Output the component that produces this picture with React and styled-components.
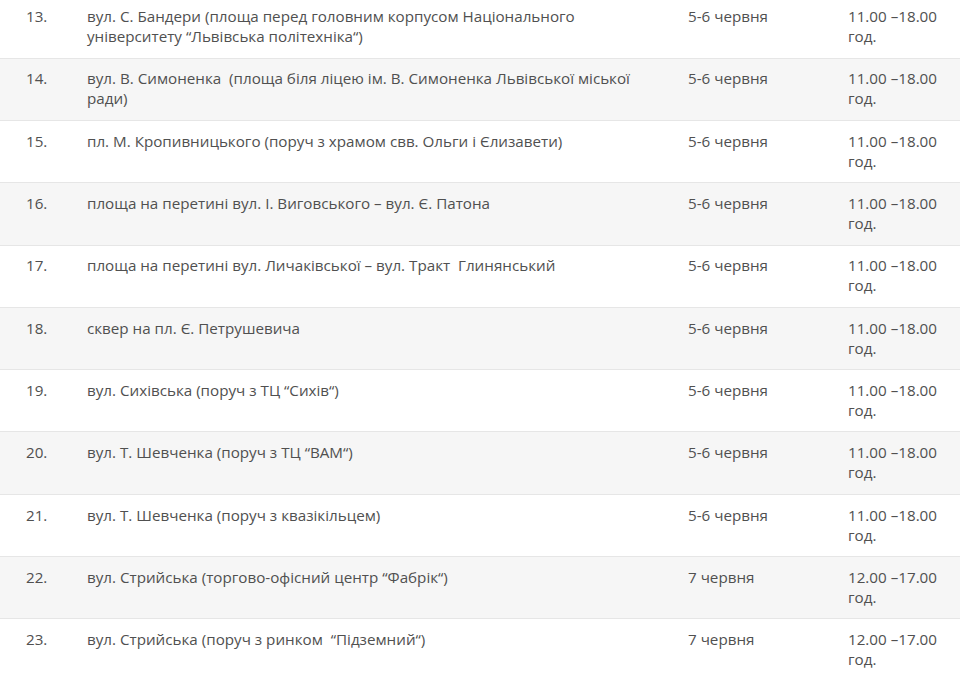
import React from 'react';
import styled, { createGlobalStyle } from 'styled-components';

const GlobalStyle = createGlobalStyle`
  html, body {
    margin: 0;
    padding: 0;
    background: #ffffff;
    overflow: hidden;
  }
`;

const Table = styled.div`
  margin-top: -3.6px;
  width: 960px;
  font-family: "Open Sans", "Noto Sans", sans-serif;
  font-size: 15.2px;
  line-height: 20px;
  color: #505050;
`;

const Row = styled.div`
  display: grid;
  grid-template-columns: 87px 601px 160px 1fr;
  padding: 9.75px 0 11.55px;
  border-bottom: 1px solid #e6e6e6;
  background: ${(p) => (p.$shaded ? '#f6f6f6' : '#ffffff')};
`;

const NumCell = styled.div`
  padding-left: 26px;
`;

const AddressCell = styled.div`
  padding-right: 36px;
  white-space: pre-wrap;
`;

const DateCell = styled.div``;

const TimeCell = styled.div`
  padding-right: 12px;
`;

const rows = [
  ['13.', 'вул. С. Бандери (площа перед головним корпусом Національного університету “Львівська політехніка“)', '5-6 червня', '11.00 –18.00 год.'],
  ['14.', 'вул. В. Симоненка  (площа біля ліцею ім. В. Симоненка Львівської міської ради)', '5-6 червня', '11.00 –18.00 год.'],
  ['15.', 'пл. М. Кропивницького (поруч з храмом свв. Ольги і Єлизавети)', '5-6 червня', '11.00 –18.00 год.'],
  ['16.', 'площа на перетині вул. І. Виговського – вул. Є. Патона', '5-6 червня', '11.00 –18.00 год.'],
  ['17.', 'площа на перетині вул. Личаківської – вул. Тракт  Глинянський', '5-6 червня', '11.00 –18.00 год.'],
  ['18.', 'сквер на пл. Є. Петрушевича', '5-6 червня', '11.00 –18.00 год.'],
  ['19.', 'вул. Сихівська (поруч з ТЦ “Сихів“)', '5-6 червня', '11.00 –18.00 год.'],
  ['20.', 'вул. Т. Шевченка (поруч з ТЦ “ВАМ“)', '5-6 червня', '11.00 –18.00 год.'],
  ['21.', 'вул. Т. Шевченка (поруч з квазікільцем)', '5-6 червня', '11.00 –18.00 год.'],
  ['22.', 'вул. Стрийська (торгово-офісний центр “Фабрік“)', '7 червня', '12.00 –17.00 год.'],
  ['23.', 'вул. Стрийська (поруч з ринком  “Підземний“)', '7 червня', '12.00 –17.00 год.'],
];

export default function App() {
  return (
    <>
      <GlobalStyle />
      <Table>
        {rows.map(([num, address, date, time], i) => (
          <Row key={num} $shaded={i % 2 === 1}>
            <NumCell>{num}</NumCell>
            <AddressCell>{address}</AddressCell>
            <DateCell>{date}</DateCell>
            <TimeCell>{time}</TimeCell>
          </Row>
        ))}
      </Table>
    </>
  );
}
